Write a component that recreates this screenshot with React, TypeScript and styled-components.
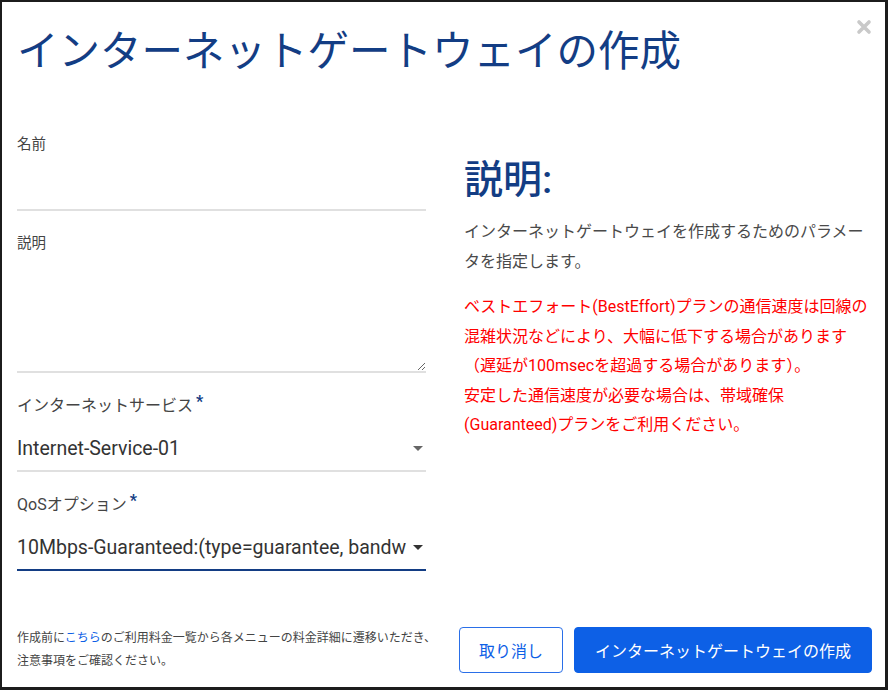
import React from "react";
import styled, { createGlobalStyle } from "styled-components";

const GlobalStyle = createGlobalStyle`
    html, body {
        margin: 0;
        padding: 0;
        background: #fff;
    }
    * {
        box-sizing: border-box;
    }
`;

const FONT = `"Roboto", "Noto Sans CJK JP", "Noto Sans", sans-serif`;
const NAVY = "#133d84";
const BLUE = "#0d60e6";

const Modal = styled.div`
    width: 888px;
    height: 690px;
    border: 2px solid #1c1c1c;
    border-right-width: 3px;
    border-bottom-width: 3px;
    background: #fff;
    font-family: ${FONT};
    display: flex;
    flex-direction: column;
    padding: 0 13px 0 15px;
`;

const Header = styled.div`
    display: flex;
    justify-content: space-between;
    align-items: flex-start;
    padding-top: 8px;
    height: 133px;
`;

const Title = styled.h1`
    margin: 0;
    font-size: 41.5px;
    line-height: 84px;
    font-weight: 400;
    color: ${NAVY};
`;

const CloseButton = styled.button`
    border: none;
    background: none;
    padding: 0;
    margin: 9px 0 0 0;
    width: 16px;
    height: 16px;
    cursor: pointer;
    display: flex;
`;

const Body = styled.div`
    display: grid;
    grid-template-columns: 409px 404px;
    column-gap: 38px;
    flex: 1;
`;

const FormColumn = styled.div`
    display: flex;
    flex-direction: column;
    gap: 23px;
`;

const Field = styled.div`
    display: flex;
    flex-direction: column;
`;

const Label = styled.label<{ big?: boolean }>`
    font-size: ${({ big }) => (big ? "16px" : "14.5px")};
    line-height: 20px;
    color: #444;
    display: flex;
    align-items: flex-start;
`;

const Required = styled.span`
    color: ${NAVY};
    font-size: 16px;
    font-weight: 700;
    line-height: 12px;
    margin-left: 3px;
`;

const TextInput = styled.input`
    height: 56px;
    border: none;
    border-bottom: 2px solid #e0e0e0;
    outline: none;
    font-family: ${FONT};
    font-size: 16px;
    padding: 0;
    background: transparent;
`;

const TextArea = styled.textarea`
    height: 119px;
    border: none;
    border-bottom: 2px solid #e0e0e0;
    outline: none;
    font-family: ${FONT};
    font-size: 16px;
    padding: 0;
    resize: vertical;
    background: transparent;
`;

const Select = styled.div<{ active?: boolean }>`
    height: 56px;
    display: flex;
    align-items: flex-end;
    gap: 6px;
    padding-bottom: 9px;
    border-bottom: 2px solid ${({ active }) => (active ? NAVY : "#e0e0e0")};
    color: #333;
`;

const SelectValue = styled.span`
    flex: 1;
    font-size: 19.5px;
    line-height: 24px;
    white-space: nowrap;
    overflow: hidden;
`;

const Arrow = styled.span<{ dark?: boolean }>`
    width: 0;
    height: 0;
    border-left: 5px solid transparent;
    border-right: 5px solid transparent;
    border-top: 5px solid ${({ dark }) => (dark ? "#333" : "#666")};
    margin: 0 3px 10px 0;
`;

const InfoColumn = styled.div`
    padding-top: 22px;
`;

const InfoTitle = styled.h2`
    margin: 0 0 14px;
    font-size: 39px;
    line-height: 46px;
    font-weight: 500;
    color: ${NAVY};
`;

const InfoText = styled.p<{ warn?: boolean }>`
    margin: 0 0 15px;
    font-size: 16px;
    line-height: ${({ warn }) => (warn ? "29.6px" : "30px")};
    color: ${({ warn }) => (warn ? "#ff0000" : "#4a4a4a")};
    line-break: strict;
`;

const Footer = styled.div`
    display: flex;
    justify-content: space-between;
    align-items: center;
    height: 74px;
`;

const Note = styled.p`
    margin: 0;
    font-size: 12px;
    line-height: 23px;
    color: #444;
    width: 428px;
`;

const Link = styled.a`
    color: ${BLUE};
    text-decoration: none;
`;

const Actions = styled.div`
    display: flex;
    gap: 11px;
    flex-shrink: 0;
`;

const Button = styled.button<{ primary?: boolean }>`
    height: 46px;
    padding: 0 ${({ primary }) => (primary ? "20px" : "19px")};
    border-radius: 4px;
    border: 1px solid ${({ primary }) => (primary ? BLUE : "#2a6fe8")};
    background: ${({ primary }) => (primary ? BLUE : "#fff")};
    color: ${({ primary }) => (primary ? "#fff" : BLUE)};
    font-family: ${FONT};
    font-size: 16px;
    white-space: nowrap;
    cursor: pointer;
`;

export default function App() {
    return (
        <>
            <GlobalStyle />
            <Modal>
                <Header>
                    <Title>インターネットゲートウェイの作成</Title>
                    <CloseButton aria-label="閉じる">
                        <svg width="16" height="16" viewBox="0 0 16 16">
                            <path
                                d="M3 3 L13 13 M13 3 L3 13"
                                stroke="#c9c9c9"
                                strokeWidth="3.6"
                                strokeLinecap="round"
                            />
                        </svg>
                    </CloseButton>
                </Header>
                <Body>
                    <FormColumn>
                        <Field>
                            <Label>名前</Label>
                            <TextInput />
                        </Field>
                        <Field>
                            <Label>説明</Label>
                            <TextArea />
                        </Field>
                        <Field>
                            <Label big>
                                インターネットサービス<Required>*</Required>
                            </Label>
                            <Select>
                                <SelectValue>Internet-Service-01</SelectValue>
                                <Arrow />
                            </Select>
                        </Field>
                        <Field>
                            <Label big>
                                QoSオプション<Required>*</Required>
                            </Label>
                            <Select active>
                                <SelectValue>
                                    10Mbps-Guaranteed:(type=guarantee, bandwidth=10Mbps)
                                </SelectValue>
                                <Arrow dark />
                            </Select>
                        </Field>
                    </FormColumn>
                    <InfoColumn>
                        <InfoTitle>説明:</InfoTitle>
                        <InfoText>
                            インターネットゲートウェイを作成するためのパラメータを指定します。
                        </InfoText>
                        <InfoText warn>
                            ベストエフォート(BestEffort)プランの通信速度は回線の混雑状況などにより、大幅に低下する場合があります（遅延が100msecを超過する場合があります）。
                            <br />
                            安定した通信速度が必要な場合は、帯域確保(Guaranteed)プランをご利用ください。
                        </InfoText>
                    </InfoColumn>
                </Body>
                <Footer>
                    <Note>
                        作成前に<Link href="#">こちら</Link>
                        のご利用料金一覧から各メニューの料金詳細に遷移いただき、注意事項をご確認ください。
                    </Note>
                    <Actions>
                        <Button>取り消し</Button>
                        <Button primary>インターネットゲートウェイの作成</Button>
                    </Actions>
                </Footer>
            </Modal>
        </>
    );
}
